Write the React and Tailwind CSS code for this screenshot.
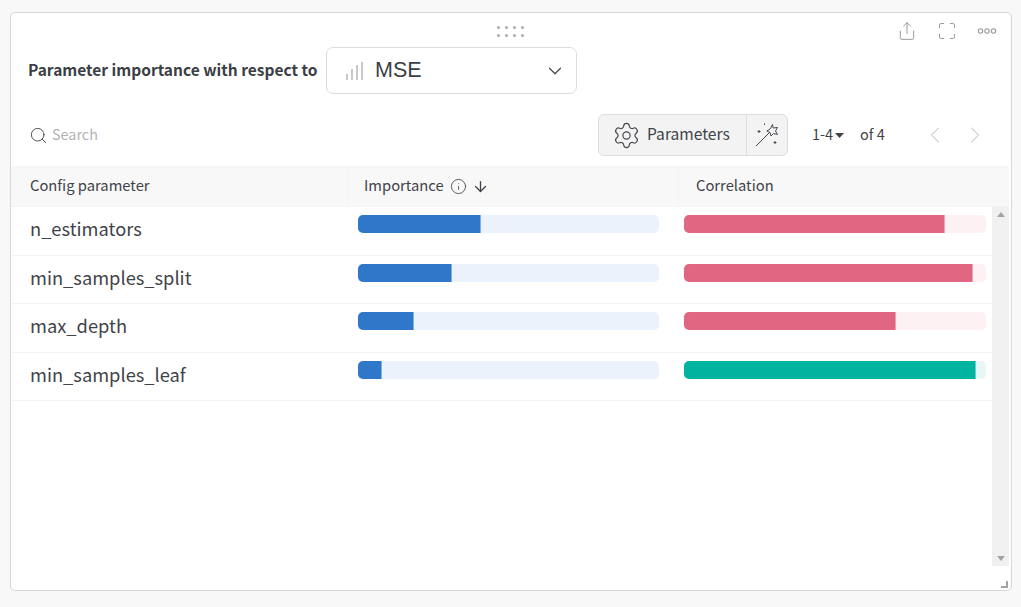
import React from "react";
import {
  ArrowDown,
  ChevronDown,
  ChevronLeft,
  ChevronRight,
  Info,
  Maximize,
  Search,
  Settings,
  Share,
} from "lucide-react";

const rows = [
  { name: "n_estimators", importance: 123, correlation: 261, positive: true },
  { name: "min_samples_split", importance: 94, correlation: 289, positive: true },
  { name: "max_depth", importance: 56, correlation: 212, positive: true },
  { name: "min_samples_leaf", importance: 24, correlation: 292, positive: false },
];

// the little stars + wand on the right of the parameters button
const WandIcon = () => (
  <svg width="26" height="26" viewBox="0 0 26 26" fill="none" stroke="#45494f" strokeWidth="1" strokeLinejoin="round">
    <path d="M2 24 L15.500 10.500" />
    <path d="M18.500 2.500 L19.200 6 L23.500 5.500 L21.500 9 L23.500 12.500 L19.500 11.500 L17 14 L16 10.500 L12.800 9 L16.300 6.800 Z" />
    <path d="M5 8v3M3.500 9.500h3" />
    <path d="M10.500 1.500v1.500" />
    <path d="M21 19v3M19.500 20.500h3" />
  </svg>
);

const MetricIcon = () => (
  <svg width="17" height="18" viewBox="0 0 17 18" fill="none" stroke="#a3a5a8" strokeWidth="1.200">
    <path d="M1 18v-6M6 18V7M11 18V3M16 18V0" />
  </svg>
);

const DragHandle = () => (
  <div className="absolute left-[486px] top-[13px] grid grid-cols-4 gap-x-[5px] gap-y-[5px]">
    {Array.from({ length: 8 }).map((_, i) => (
      <span key={i} className="h-[3px] w-[3px] rounded-full bg-[#a8aaad]" />
    ))}
  </div>
);

const Bar = ({ width, fill, track }) => (
  <div className={`h-[18px] w-full overflow-hidden rounded-[5px] ${track}`}>
    <div
      className={`h-full border-r border-white/40 ${fill}`}
      style={{ width }}
    />
  </div>
);

export default function App() {
  return (
    <div className="h-[607px] w-[1021px] bg-[#f8f8f8] pl-[10px] pr-[9px] pt-[12px] font-['Noto_Sans_CJK_SC',sans-serif] text-[#3f4349]">
      <div className="relative flex h-[579px] flex-col rounded-[5px] border border-[#d6d7d9] bg-white">
        <DragHandle />

        <div className="absolute right-[14px] top-[8px] flex items-center gap-[20px] text-[#97999c]">
          <Share size={20} strokeWidth={1.2} />
          <Maximize size={20} strokeWidth={1.2} />
          <svg width="20" height="8" viewBox="0 0 20 8" fill="none" stroke="currentColor" strokeWidth="1.100">
            <circle cx="3.500" cy="4" r="2.200" />
            <circle cx="10" cy="4" r="2.200" />
            <circle cx="16.500" cy="4" r="2.200" />
          </svg>
        </div>

        {/* title + metric select */}
        <div className="flex items-center pl-[17px] pt-[34px]">
          <span className="w-[288px] whitespace-nowrap pb-[2px] text-[15.500px] font-bold text-[#3b3f45]">
            Parameter importance with respect to
          </span>
          <div className="ml-[10px] flex h-[47px] w-[251px] items-center rounded-[7px] border border-[#dcdddf] pl-[19px] pr-[10px]">
            <MetricIcon />
            <span className="ml-[12px] font-['Liberation_Sans',sans-serif] text-[21.500px] text-[#3b3f45]">MSE</span>
            <ChevronDown size={22} strokeWidth={1.300} className="ml-auto text-[#45494f]" />
          </div>
        </div>

        {/* toolbar */}
        <div className="mt-[20px] flex h-[42px] items-center pl-[18px]">
          <Search size={19} strokeWidth={1.200} className="text-[#45494f]" />
          <span className="ml-[4px] w-[60px] pb-[2px] text-[14.400px] text-[#b2b4b7]">Search</span>

          <div className="ml-[486px] flex h-[42px] w-[190px] rounded-[6px] border border-[#dcdddf] bg-[#f3f3f3]">
            <div className="flex w-[148px] items-center border-r border-[#dcdddf] pl-[13px]">
              <Settings size={29} strokeWidth={1} className="text-[#45494f]" />
              <span className="ml-[6px] pb-[2px] text-[15.600px]">Parameters</span>
            </div>
            <div className="flex flex-1 items-center justify-center">
              <WandIcon />
            </div>
          </div>

          <div className="ml-[24px] flex w-[48px] items-center pb-[2px] text-[14.500px]">
            <span>1-4</span>
            <svg width="9" height="5" viewBox="0 0 9 5" className="ml-[2px] mt-[2px]" fill="#3f4349">
              <path d="M0 0h9L4.500 5z" />
            </svg>
          </div>
          <span className="w-[36px] pb-[2px] text-[14.500px]">of 4</span>
          <ChevronLeft size={28} strokeWidth={0.900} className="ml-[25px] text-[#c3c5c7]" />
          <ChevronRight size={28} strokeWidth={0.900} className="ml-[12px] text-[#c3c5c7]" />
        </div>

        {/* table */}
        <div className="mr-[2px] mt-[10px] flex flex-1 flex-col">
          <div className="flex h-[41px] items-center border-b border-[#f3f3f3] bg-[#f8f8f8] text-[14.750px]">
            <div className="w-[337px] pl-[19px] pb-[1px]">Config parameter</div>
            <div className="flex h-full w-[330px] items-center border-l border-[#f4f4f4] pl-[15px]">
              <span className="pb-[1px]">Importance</span>
              <Info size={17} strokeWidth={1.200} className="ml-[6px]" />
              <ArrowDown size={17} strokeWidth={1.800} className="ml-[5px]" />
            </div>
            <div className="flex h-full flex-1 items-center border-l border-[#f4f4f4] pl-[17px] pb-[1px]">Correlation</div>
          </div>

          <div className="flex flex-1">
            <div className="flex-1">
              {rows.map((row) => (
                <div key={row.name} className="flex h-[48.500px] border-b border-[#f3f3f3]">
                  <div className="flex w-[337px] items-start pl-[19px] pt-[8px] text-[18.300px]">{row.name}</div>
                  <div className="w-[330px] pl-[10px] pr-[19px] pt-[8px]">
                    <Bar width={row.importance} fill="bg-[#2f77c9]" track="bg-[#ebf2fb]" />
                  </div>
                  <div className="flex-1 pl-[6px] pr-[6px] pt-[8px]">
                    <Bar
                      width={row.correlation}
                      fill={row.positive ? "bg-[#e06681]" : "bg-[#00b4a0]"}
                      track={row.positive ? "bg-[#fdf1f3]" : "bg-[#e6f7f6]"}
                    />
                  </div>
                </div>
              ))}
            </div>

            {/* scrollbar */}
            <div className="mb-[24px] flex w-[17px] flex-col items-center justify-between bg-[#f0f0f0] py-[5px]">
              <svg width="8" height="5" viewBox="0 0 8 5" fill="#a3a3a3"><path d="M0 5h8L4 0z" /></svg>
              <svg width="8" height="5" viewBox="0 0 8 5" fill="#a3a3a3"><path d="M0 0h8L4 5z" /></svg>
            </div>
          </div>
        </div>

        <svg width="7" height="7" viewBox="0 0 7 7" className="absolute bottom-[2px] right-[3px]" fill="#a3a3a3">
          <path d="M5 0h2v7H0V5h5z" />
        </svg>
      </div>
    </div>
  );
}
